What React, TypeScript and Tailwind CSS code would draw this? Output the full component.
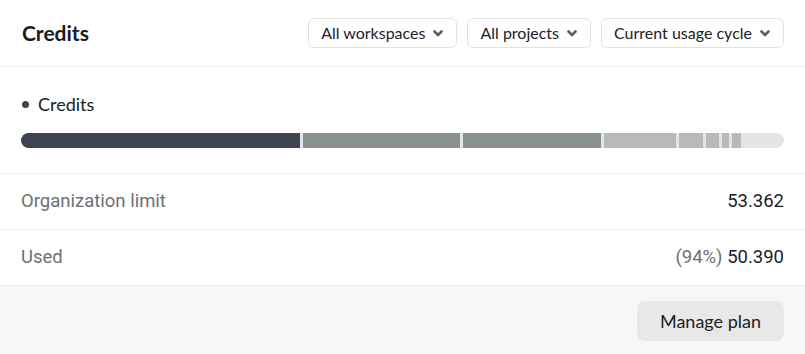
const segments = [
  { w: 279, c: 'bg-[#3d4650]' },
  { w: 157, c: 'bg-[#8a9191]' },
  { w: 138, c: 'bg-[#8a9191]' },
  { w: 72, c: 'bg-[#b6bbba]' },
  { w: 24, c: 'bg-[#b6bbba]' },
  { w: 13, c: 'bg-[#b6bbba]' },
  { w: 7, c: 'bg-[#b6bbba]' },
  { w: 9, c: 'bg-[#b6bbba]' },
];

function Chevron() {
  return (
    <svg width="10" height="7" viewBox="0 0 10 7" className="text-[#5a5f64]">
      <path d="M1.5 1.5 L5 5 L8.5 1.5" fill="none" stroke="currentColor" strokeWidth="2.6" strokeLinecap="round" strokeLinejoin="round" />
    </svg>
  );
}

function Dropdown({ label }: { label: string }) {
  return (
    <button className="flex items-center gap-[8px] h-[30px] pl-[12px] pr-[13px] border border-[#e3e3e3] rounded-[6px] bg-white text-[16px] text-[#1d2126]">
      {label}
      <Chevron />
    </button>
  );
}

function Row({ label, children }: { label: string; children: React.ReactNode }) {
  return (
    <div className="flex items-center justify-between h-[56px] px-[21px] border-b border-[#ececec] font-['Roboto',sans-serif] text-[18.5px]">
      <span className="text-[#6c7075]">{label}</span>
      {children}
    </div>
  );
}

export default function App() {
  return (
    <div className="w-[805px] h-[354px] bg-white font-['Lato',sans-serif] flex flex-col">
      <div className="flex items-center justify-between h-[67px] pl-[22px] pr-[21px] border-b border-[#ececec]">
        <h1 className="text-[21px] font-bold text-[#1a1d21]">Credits</h1>
        <div className="flex items-center gap-[10px]">
          <Dropdown label="All workspaces" />
          <Dropdown label="All projects" />
          <Dropdown label="Current usage cycle" />
        </div>
      </div>

      <div className="px-[21px] pt-[24px] pb-[25px] border-b border-[#ececec]">
        <div className="flex items-center gap-[9px] text-[18px] text-[#1d2126] pl-[1px]">
          <span className="w-[7px] h-[7px] rounded-full bg-[#3d4650]" />
          Credits
        </div>
        <div className="mt-[15px] flex h-[15px] rounded-full overflow-hidden bg-[#e4e5e6] gap-[3px]">
          {segments.map((s, i) => (
            <div key={i} className={`h-full shrink-0 ${s.c}`} style={{ width: s.w }} />
          ))}
        </div>
      </div>

      <Row label="Organization limit">
        <span className="text-[#1d2126]">53.362</span>
      </Row>
      <Row label="Used">
        <span>
          <span className="text-[#6c7075]">(94%)</span>{' '}
          <span className="text-[#1d2126]">50.390</span>
        </span>
      </Row>

      <div className="flex-1 bg-[#f7f7f7] flex items-start justify-end px-[21px] pt-[15px]">
        <button className="h-[40px] px-[23px] rounded-[8px] bg-[#e8e8e8] text-[18px] text-[#1d2126]">
          Manage plan
        </button>
      </div>
    </div>
  );
}
